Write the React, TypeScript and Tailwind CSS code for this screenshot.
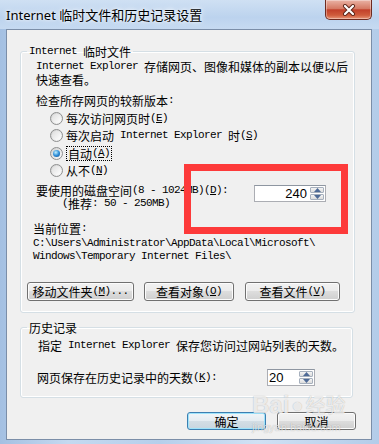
import React from "react";

const asc = "font-['Liberation_Mono'] text-[11px] tracking-[-0.6px] whitespace-pre";

// mixed CJK / ASCII text, "&X" underlines the access key
const T = ({ s }: { s: string }) => {
  const parts = s.split(/([\x20-\x7e]+)/).filter(Boolean);
  return (
    <>
      {parts.map((p, i) =>
        /^[\x20-\x7e]+$/.test(p) ? (
          <span key={i} className={asc}>
            {p.split(/(&.)/).map((q, j) =>
              q.length === 2 && q[0] === "&" ? (
                <u key={j} className="underline-offset-1">{q[1]}</u>
              ) : (
                q
              )
            )}
          </span>
        ) : (
          <span key={i}>{p}</span>
        )
      )}
    </>
  );
};

// one text line, fixed 13px high
const L = ({ s, className = "" }: { s: string; className?: string }) => (
  <div className={`h-[13px] flex items-center whitespace-nowrap ${className}`}>
    <T s={s} />
  </div>
);

const Radio = ({ on }: { on?: boolean }) => (
  <span className="w-[13px] h-[13px] rounded-full border border-[#8e8f8f] bg-[linear-gradient(135deg,#cfcfcf,#fbfbfb)] flex items-center justify-center shrink-0">
    {on ? (
      <span className="w-[7px] h-[7px] rounded-full bg-[radial-gradient(circle_at_40%_35%,#c2f0ff,#2f8fd9_50%,#0d4a8c)]" />
    ) : (
      <span className="w-[9px] h-[9px] rounded-full bg-[linear-gradient(135deg,#dedede,#ffffff)]" />
    )}
  </span>
);

const Spin = ({ v, w, left }: { v: string; w: string; left?: boolean }) => (
  <div className={`flex h-[17px] border border-[#abadb3] border-t-[#8e96a1] bg-white ${w}`}>
    <span
      className={`flex-1 font-['Liberation_Sans'] text-[13px] leading-[15px] ${
        left ? "text-left pl-[1px]" : "text-right pr-[2px]"
      }`}
    >
      {v}
    </span>
    <div className="w-[16px] flex flex-col gap-px p-px">
      <span className="flex-1 flex items-center justify-center border border-[#a6b0bd] rounded-[1px] bg-[linear-gradient(#f4f4f4,#dcdcdc)]">
        <svg width="7" height="4" viewBox="0 0 7 4">
          <path d="M0 4 L3.5 0 L7 4 Z" fill="#4e6a96" />
        </svg>
      </span>
      <span className="flex-1 flex items-center justify-center border border-[#a6b0bd] rounded-[1px] bg-[linear-gradient(#f4f4f4,#dcdcdc)]">
        <svg width="7" height="4" viewBox="0 0 7 4">
          <path d="M0 0 L3.5 4 L7 0 Z" fill="#4e6a96" />
        </svg>
      </span>
    </div>
  </div>
);

const btn =
  "flex items-center justify-center rounded-[3px] border border-[#707070] bg-[linear-gradient(#f2f2f2_0%,#ebebeb_50%,#dddddd_50%,#cfcfcf_100%)] shadow-[inset_0_0_0_1px_#fcfcfc]";

export default function App() {
  return (
    <div className="relative w-[379px] h-[444px] overflow-hidden flex flex-col bg-[linear-gradient(90deg,#a4c0e2,#c4d9f0_18%,#b6cfeb_42%,#d0e1f4_68%,#b3cce9)] font-['Noto_Sans_CJK_SC',sans-serif] text-black">
      {/* title bar */}
      <div className="h-[29px] shrink-0 flex items-center pl-[6px] bg-[linear-gradient(#cfe0f3,#bcd3ee_60%,#c6daf1)]">
        <span className="font-['Noto_Sans','Noto_Sans_CJK_SC',sans-serif] text-[13px] leading-[16px] [text-shadow:0_0_6px_#fff,0_0_3px_#fff]">
          Internet 临时文件和历史记录设置
        </span>
      </div>
      <div className="absolute top-0 right-[7px] w-[47px] h-[20px] rounded-b-[5px] border border-t-0 border-[#6e2b20] bg-[linear-gradient(#eab3a5,#d57a64_45%,#c2402a_52%,#cf5c3c_80%,#e89678)] shadow-[inset_0_0_0_1px_rgba(255,255,255,0.35)] flex items-center justify-center">
        <svg width="14" height="12" viewBox="0 0 14 12">
          <path d="M3 2 L11 10 M11 2 L3 10" stroke="#5a2418" strokeWidth="4" strokeLinecap="round" />
          <path d="M3 2 L11 10 M11 2 L3 10" stroke="#fff" strokeWidth="2.2" strokeLinecap="round" />
        </svg>
      </div>

      {/* client area */}
      <div className="ml-[6px] w-[366px] h-[411px] shrink-0 border border-[#7b8ea8] bg-[#f0f0f0] text-[12px] leading-[13px]">
        <fieldset className="ml-[13px] mt-[15px] w-[335px] rounded-[3px] border border-[#d5dfe5] shadow-[inset_0_0_0_1px_#fff] pb-[11px]">
          <legend className="ml-[6px] px-[2px]">
            <L s="Internet 临时文件" />
          </legend>
          <div className="pl-[15px] flex flex-col">
            <div className="mt-[2px]">
              <L s="Internet Explorer 存储网页、图像和媒体的副本以便以后" />
              <L s="快速查看。" />
            </div>
            <L className="mt-[8px]" s="检查所存网页的较新版本:" />
            <div className="mt-[2.5px] pl-[14px] flex flex-col">
              <div className="h-[17.5px] flex items-center gap-[3px]">
                <Radio />
                <L s="每次访问网页时(&E)" />
              </div>
              <div className="h-[17.5px] flex items-center gap-[3px]">
                <Radio />
                <L s="每次启动 Internet Explorer 时(&S)" />
              </div>
              <div className="h-[17.5px] flex items-center gap-[3px]">
                <Radio on />
                <div className="border border-dotted border-black px-px">
                  <L s="自动(&A)" />
                </div>
              </div>
              <div className="h-[17.5px] flex items-center gap-[3px]">
                <Radio />
                <L s="从不(&N)" />
              </div>
            </div>
            <div className="mt-[4px] flex items-start">
              <div className="flex flex-col">
                <L s="要使用的磁盘空间(8 - 1024MB)(&D):" />
                <L className="pl-[26px]" s="(推荐: 50 - 250MB)" />
              </div>
              <div className="ml-[26px] mt-[1.5px]">
                <Spin v="240" w="w-[72px]" />
              </div>
            </div>
            <L className="mt-[12px] -ml-[3px]" s="当前位置:" />
            <div className="mt-[2px] -ml-[3px]">
              <L s="C:\Users\Administrator\AppData\Local\Microsoft\" />
              <L s="Windows\Temporary Internet Files\" />
            </div>
            <div className="mt-[19.5px] -ml-[9px] flex gap-[10px]">
              <button className={`${btn} w-[107px] h-[19px]`}><L s="移动文件夹(&M)..." /></button>
              <button className={`${btn} w-[90px] h-[19px]`}><L s="查看对象(&O)" /></button>
              <button className={`${btn} w-[95px] h-[19px] ml-px`}><L s="查看文件(&V)" /></button>
            </div>
          </div>
        </fieldset>

        <fieldset className="ml-[13px] mt-[8px] w-[333px] rounded-[3px] border border-[#d5dfe5] shadow-[inset_0_0_0_1px_#fff] pb-[11px]">
          <legend className="ml-[6px] px-[2px]">
            <L s="历史记录" />
          </legend>
          <div className="pl-[17px] flex flex-col">
            <L className="mt-[4.5px]" s="指定 Internet Explorer 保存您访问过网站列表的天数。" />
            <div className="mt-[17.5px] -ml-px flex items-center h-[17px]">
              <L s="网页保存在历史记录中的天数(&K):" />
              <div className="ml-[50px]">
                <Spin v="20" w="w-[48px]" left />
              </div>
            </div>
          </div>
        </fieldset>

        <div className="mt-[14px] pr-[15px] flex justify-end gap-[11px]">
          <button className="w-[79px] h-[18px] flex items-center justify-center rounded-[3px] border border-[#3c7fb1] bg-[linear-gradient(#f1f5f8_0%,#e4ecf1_50%,#d3dee5_50%,#c8d6df_100%)] shadow-[inset_0_0_0_1px_#9ee3fb]">
            <L s="确定" />
          </button>
          <button className={`${btn} w-[79px] h-[18px]`}>
            <L s="取消" />
          </button>
        </div>
      </div>

      {/* annotation */}
      <div className="absolute left-[184px] top-[164px] w-[164px] h-[70px] border-[7px] border-[#fd3a3a]" />

      {/* watermark */}
      <div className="absolute left-[252px] top-[393px] flex flex-col items-start text-white/75 [text-shadow:0_0_1px_rgba(0,0,0,0.3)] pointer-events-none">
        <div className="flex items-end gap-[2px] font-['Liberation_Sans'] font-bold text-[24px] leading-[24px]">
          <span>Bai</span>
          <span className="text-[20px]">●</span>
          <span className="font-['Noto_Sans_CJK_SC'] text-[20px] font-normal">经验</span>
        </div>
        <div className="font-['Liberation_Sans'] text-[11px] leading-[12px] mt-[4px] text-white/70">jingyan.baidu.com</div>
      </div>
    </div>
  );
}
